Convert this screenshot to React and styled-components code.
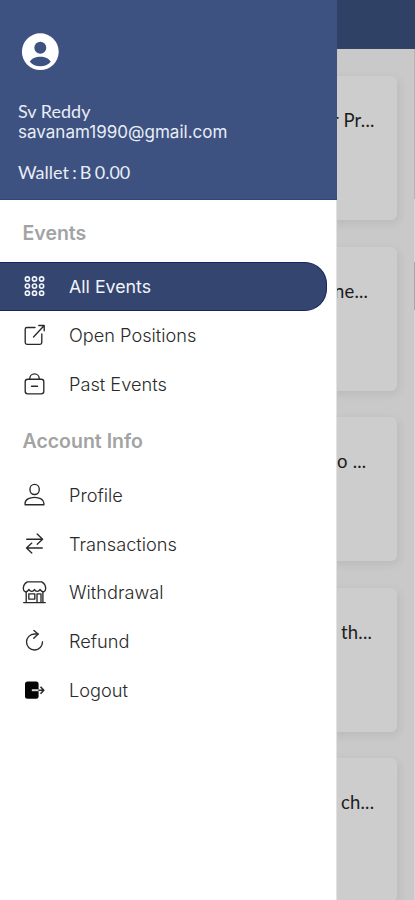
// src/App.jsx
import React from 'react';
import styled, { createGlobalStyle, css } from 'styled-components';

const GlobalStyle = createGlobalStyle`
  * {
    box-sizing: border-box;
  }

  body {
    margin: 0;
    background: #fff;
    overflow: hidden;
  }
`;

// Styled components
const Screen = styled.div`
  position: relative;
  width: 415px;
  height: 900px;
  overflow: hidden;
  background: #c9c9c9;
  font-family: Inter, 'Liberation Sans', sans-serif;
`;

const TopBar = styled.header`
  height: 49px;
  background: #2f4266;
  border-bottom: 1px solid #354264;
`;

const CardList = styled.main`
  display: flex;
  flex-direction: column;
  gap: 26.6px;
  padding: 27px 18px 0;
`;

const EventCard = styled.article`
  flex-shrink: 0;
  height: 144px;
  padding: 32px 0 0 ${({ $indent }) => $indent}px;
  border-radius: 6px;
  background: #cdcdcd;
  box-shadow: 2px 3px 10px rgba(0, 0, 0, 0.08);
  color: #1c1c1c;
  font-family: Lato, sans-serif;
  font-size: 18.5px;
  line-height: 25px;
  letter-spacing: 0.2px;
  white-space: pre;
`;

const ScreenEdge = styled.div`
  position: absolute;
  top: 49px;
  right: 0;
  width: 1px;
  height: 851px;
  background: linear-gradient(
    #b4b4b4 0 150px,
    #d6d6d6 150px 213px,
    #a8a8a8 213px 261px,
    #d6d6d6 261px
  );
`;

const Drawer = styled.aside`
  position: absolute;
  top: 0;
  left: 0;
  bottom: 0;
  width: 337px;
  background: #fff;
  border-right: 1px solid #e2e2e2;
`;

const DrawerHeader = styled.div`
  display: flex;
  flex-direction: column;
  width: 337px;
  height: 200px;
  padding: 33px 18px 0;
  background: #3d5280;
  border-bottom: 1px solid #2c4778;
  color: #e9edf7;
`;

const Avatar = styled.svg`
  width: 38px;
  height: 38px;
  margin: 0 0 30px 3px;
`;

const UserName = styled.div`
  font: 18px/20px Lato, sans-serif;
`;

const UserEmail = styled.div`
  margin-top: 1px;
  font-size: 17.05px;
  line-height: 20px;
`;

const Wallet = styled.div`
  margin-top: 19px;
  font: 18px/22px Lato, sans-serif;
  word-spacing: -1.4px;
`;

const SectionTitle = styled.h3`
  margin: 18px 0 14px;
  padding-left: 22.5px;
  color: #a3a3a3;
  font-size: 19.5px;
  font-weight: 600;
  line-height: 30px;
`;

const NavItem = styled.div`
  display: flex;
  align-items: center;
  gap: 22px;
  width: 327px;
  height: 48.8px;
  padding-left: 22px;
  color: #2a2a2a;
  font-size: 18.2px;
  font-weight: 300;
  border-radius: 0 22px 22px 0;

  ${({ $active }) => $active && css`
    background: #34466f;
    border: solid #17245f;
    border-width: 1px 1px 1px 0;
    color: #f1f4fb;
    font-size: 17.8px;
    font-weight: 400;
  `}
`;

const NavIcon = styled.svg`
  width: 25px;
  height: 26px;
  flex-shrink: 0;
  fill: none;
  stroke: currentColor;
  stroke-width: 1.35;
  stroke-linecap: round;
  stroke-linejoin: round;
`;

// Icons, all on a 25x26 grid
const GridIcon = () => (
  <NavIcon viewBox="0 0 25 26">
    {[6, 13.1, 20.2].map((y) =>
      [5.4, 12.5, 19.6].map((x) => <circle key={`${x}-${y}`} cx={x} cy={y} r="2.1" strokeWidth="1.6" />)
    )}
  </NavIcon>
);

const OpenIcon = () => (
  <NavIcon viewBox="0 0 25 26">
    <path d="M13 5.5H5a1.8 1.8 0 0 0-1.8 1.8V20.6A1.8 1.8 0 0 0 5 22.4h13a1.8 1.8 0 0 0 1.8-1.8V12" />
    <path d="M11.5 15L22 3.7M16.8 3.5h5.4v5.3" />
  </NavIcon>
);

const BagIcon = () => (
  <NavIcon viewBox="0 0 25 26">
    <rect x="3.2" y="8.2" width="18.6" height="14.6" rx="2.5" />
    <path d="M7.8 8.2v-.6a4.7 4.7 0 0 1 9.4 0v.6" />
    <path d="M9.5 15.2h6" />
  </NavIcon>
);

const ProfileIcon = () => (
  <NavIcon viewBox="0 0 25 26">
    <rect x="8" y="2.3" width="9.2" height="10.2" rx="4.5" />
    <path d="M3.1 22.7v-1.4c0-3.7 4.4-6 9.4-6s9.4 2.3 9.4 6v1.4z" />
  </NavIcon>
);

const TransferIcon = () => (
  <NavIcon viewBox="0 0 25 26">
    <path d="M4.7 8.2h15.7M15.2 3l5.4 5.2-5.4 5" />
    <path d="M20.3 17H4.7M9.8 12.1L4.5 17l5.3 5" />
  </NavIcon>
);

const ShopIcon = () => (
  <NavIcon viewBox="0 0 25 26">
    <path d="M5.3 2.8h14.4c2.5 1.4 4 4.2 4 6.6 0 1.8-.8 2.8-2.1 3.4-1.8-.1-2.9-1-3.6-2.4-.6 1.4-1.5 1.9-2.8 1.9s-2.2-.6-2.7-1.9c-.5 1.3-1.4 1.9-2.7 1.9s-2.2-.5-2.8-1.9c-.7 1.4-1.8 2.3-3.6 2.4-1.3-.6-2.1-1.6-2.1-3.4 0-2.4 1.5-5.2 4-6.6z" />
    <path d="M4.2 13v10.3M20.9 13v10.3M1.7 23.6h21.6" />
    <path d="M6.8 14.9h6v5.2h-6zM15 23.3v-8.4h4v8.4" />
  </NavIcon>
);

const RefundIcon = () => (
  <NavIcon viewBox="0 0 25 26">
    <path d="M20.5 13.8A8 8 0 1 1 12.5 6h3.6" />
    <path d="M11.9 2.4L16.1 6l-4.3 4.3" />
  </NavIcon>
);

const LogoutIcon = () => (
  <NavIcon viewBox="0 0 25 26">
    <rect x="3" y="4.6" width="13.6" height="17.2" rx="2.5" fill="#050505" stroke="none" />
    <path d="M9.8 13.2h6.8" stroke="#d8d8d8" strokeWidth="2" strokeLinecap="butt" />
    <path d="M16.6 13.2h5M18.5 9.7l3.3 3.5-3.3 3.5" strokeWidth="1.6" strokeLinecap="butt" />
  </NavIcon>
);

// Menu data
const eventItems = [
  { label: 'All Events', icon: GridIcon, active: true },
  { label: 'Open Positions', icon: OpenIcon },
  { label: 'Past Events', icon: BagIcon },
];

const accountItems = [
  { label: 'Profile', icon: ProfileIcon },
  { label: 'Transactions', icon: TransferIcon },
  { label: 'Withdrawal', icon: ShopIcon },
  { label: 'Refund', icon: RefundIcon },
  { label: 'Logout', icon: LogoutIcon },
];

const cards = [
  { title: 'r Pr...', indent: 314 },
  { title: 'ne...', indent: 316 },
  { title: 'o ...', indent: 319 },
  { title: 'th...', indent: 323 },
  { title: 'ch...', indent: 323 },
];

const NavList = ({ items }) => (
  <nav>
    {items.map(({ label, icon: Icon, active }) => (
      <NavItem key={label} $active={active}>
        <Icon />
        <span>{label}</span>
      </NavItem>
    ))}
  </nav>
);

const App = () => (
  <>
    <GlobalStyle />
    <Screen>
      <TopBar />
      <CardList>
        {cards.map((card) => (
          <EventCard key={card.title} $indent={card.indent}>{card.title}</EventCard>
        ))}
      </CardList>
      <ScreenEdge />

      <Drawer>
        <DrawerHeader>
          <Avatar viewBox="0 0 38 38">
            <circle cx="19.3" cy="18.7" r="18.4" fill="#fff" />
            <circle cx="19.3" cy="14.7" r="6" fill="#3d5280" />
            <path d="M8.8 28.8c1.5-3.2 6-5.1 10.5-5.1s9 1.9 10.5 5.1c-2.6 3.2-6.3 4.5-10.5 4.5s-7.9-1.3-10.5-4.5z" fill="#3d5280" />
          </Avatar>
          <UserName>Sv Reddy</UserName>
          <UserEmail>savanam1990@gmail.com</UserEmail>
          <Wallet>Wallet : B 0.00</Wallet>
        </DrawerHeader>

        <SectionTitle>Events</SectionTitle>
        <NavList items={eventItems} />
        <SectionTitle>Account Info</SectionTitle>
        <NavList items={accountItems} />
      </Drawer>
    </Screen>
  </>
);

export default App;
